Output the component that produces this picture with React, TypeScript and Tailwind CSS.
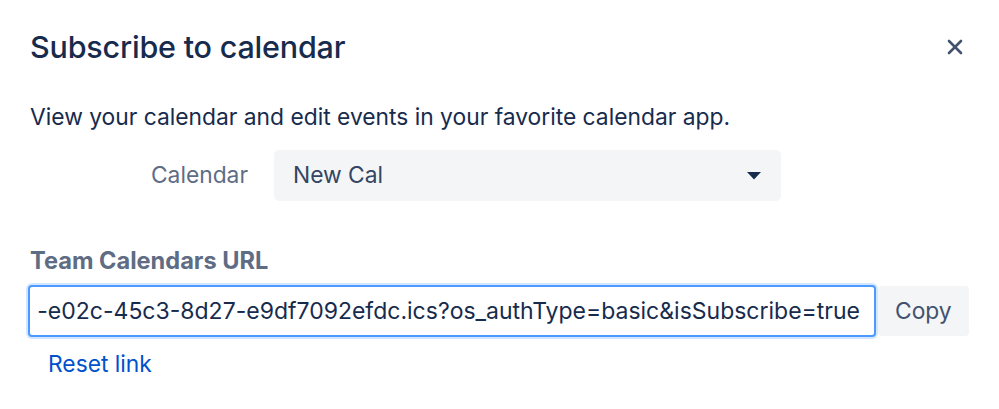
import { X } from "lucide-react";

const url = "-e02c-45c3-8d27-e9df7092efdc.ics?os_authType=basic&isSubscribe=true";

export default function App() {
  return (
    <div className="h-[409px] w-[999px] bg-white font-['Inter',sans-serif] text-[#172b4d]">
      <div className="pl-[30px] pr-[30px] pt-[28px]">
        <div className="flex items-center justify-between">
          <h1 className="text-[30.5px] font-medium leading-[38px] tracking-[-0.2px]">
            Subscribe to calendar
          </h1>
          <button className="mr-[2px] flex h-[24px] w-[24px] items-center justify-center text-[#42526e]">
            <X className="size-[24px]" strokeWidth={2.6} />
          </button>
        </div>

        <p className="mt-[37px] text-[22.8px] leading-[28px]">
          View your calendar and edit events in your favorite calendar app.
        </p>

        <div className="mt-[19px] flex items-center">
          <label className="w-[244px] pr-[26px] text-right text-[22.8px] text-[#5e6c84]">
            Calendar
          </label>
          <div className="flex h-[51px] w-[507px] items-center justify-between rounded-[5px] bg-[#f4f5f7] pl-[19px] pr-[19px]">
            <span className="text-[22.8px] text-[#344563]">New Cal</span>
            <svg width="14" height="8" viewBox="0 0 14 8" className="mr-[1px]">
              <path d="M0 0h14L7 7.5z" fill="#172b4d" />
            </svg>
          </div>
        </div>

        <div className="mt-[46px] text-[23.6px] font-bold leading-[28px] text-[#5e6c84]">
          Team Calendars URL
        </div>

        <div className="mt-[10px] flex items-center">
          <div className="-ml-[2px] flex h-[52px] w-[848px] items-center justify-end overflow-hidden whitespace-nowrap rounded-[4px] border-2 border-[#4c9aff] bg-white pr-[14px] shadow-[0_0_0_2px_rgba(76,154,255,0.25)]">
            <span className="text-[23px] text-[#172b4d]">{url}</span>
          </div>
          <button className="ml-[2px] h-[50px] rounded-[4px] bg-[#f4f5f7] px-[17px] text-[22.8px] text-[#42526e]">
            Copy
          </button>
        </div>

        <a className="ml-[18px] mt-[10px] inline-block text-[22.8px] text-[#0052cc]">Reset link</a>
      </div>
    </div>
  );
}
